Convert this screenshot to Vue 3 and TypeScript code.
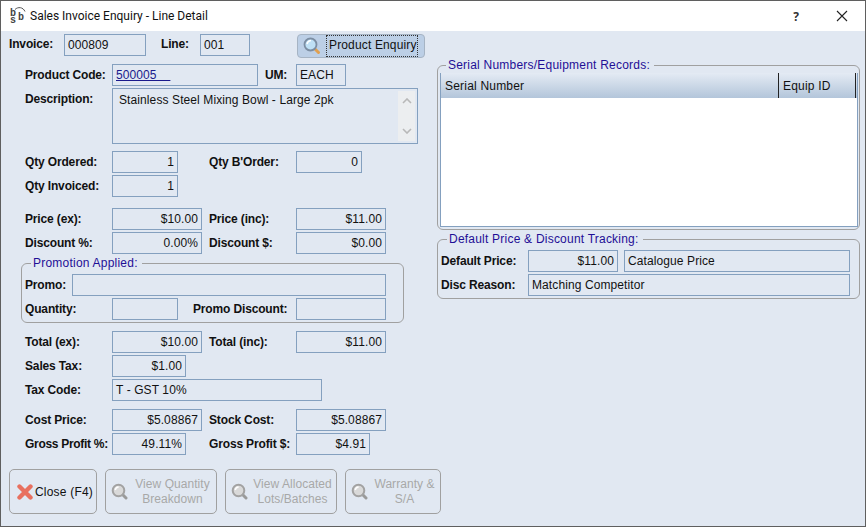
<script setup lang="ts">
const disabledActions = [
  { lines: ['View Quantity', 'Breakdown'], cls: 'w112' },
  { lines: ['View Allocated', 'Lots/Batches'], cls: 'w112' },
  { lines: ['Warranty &', 'S/A'], cls: 'w96' },
]
</script>

<template>
  <div class="window">
    <header class="titlebar">
      <svg class="logo" width="18" height="20" viewBox="0 0 18 20">
        <path d="M6 3.5 C9 0.5 14 1 16 5.5" fill="none" stroke="#555" stroke-width="1" />
        <text class="logo-t"><tspan x="1" y="10">b</tspan><tspan x="1" y="17">s</tspan><tspan x="9" y="14">b</tspan></text>
      </svg>
      <span class="title">Sales Invoice Enquiry - Line Detail</span>
      <span class="spacer"></span>
      <span class="help">?</span>
      <svg class="x" width="12" height="12" viewBox="0 0 12 12">
        <path d="M1 1 L11 11 M11 1 L1 11" stroke="#222" stroke-width="1.1" />
      </svg>
    </header>

    <main class="body">
      <section class="left">
        <div class="row top-row">
          <span class="lab inv">Invoice:</span>
          <span class="f w82">000809</span>
          <span class="lab line-lab">Line:</span>
          <span class="f w50">001</span>
          <button class="enquiry">
            <svg width="18" height="18" viewBox="0 0 18 18">
              <path d="M11.5 11.5 L15.5 15.5" stroke="#e0a050" stroke-width="3" stroke-linecap="round" />
              <circle cx="7.5" cy="7.5" r="6" fill="#bfe0f5" stroke="#7c8ea3" stroke-width="1.8" />
              <path d="M4 7 C4.5 4.8 6 3.8 8 3.6" fill="none" stroke="#fff" stroke-width="1.5" />
            </svg>
            <span class="focus">Product Enquiry</span>
          </button>
        </div>

        <div class="rows">
          <div class="row gap6">
            <span class="lab">Product Code:</span>
            <span class="f w146 link"><u>500005&nbsp;&nbsp;&nbsp;&nbsp;</u></span>
            <span class="lab um">UM:</span>
            <span class="f w50">EACH</span>
          </div>
          <div class="row desc-row gap2">
            <span class="lab desc-lab">Description:</span>
            <div class="f desc">
              <span class="desc-text">Stainless Steel Mixing Bowl - Large 2pk</span>
              <div class="scroll">
                <svg width="10" height="6" viewBox="0 0 10 6"><path d="M1 5 L5 1 L9 5" fill="none" stroke="#b8b8b8" stroke-width="1.6" /></svg>
                <svg width="10" height="6" viewBox="0 0 10 6"><path d="M1 1 L5 5 L9 1" fill="none" stroke="#b8b8b8" stroke-width="1.6" /></svg>
              </div>
            </div>
          </div>

          <div class="row gap7">
            <span class="lab">Qty Ordered:</span>
            <span class="slot"><span class="f w66 num">1</span></span>
            <span class="lab">Qty B'Order:</span>
            <span class="f w66 num">0</span>
          </div>
          <div class="row gap2">
            <span class="lab">Qty Invoiced:</span>
            <span class="f w66 num">1</span>
          </div>

          <div class="row gap11">
            <span class="lab">Price (ex):</span>
            <span class="slot"><span class="f w90 num">$10.00</span></span>
            <span class="lab">Price (inc):</span>
            <span class="f w90 num">$11.00</span>
          </div>
          <div class="row gap2">
            <span class="lab">Discount %:</span>
            <span class="slot"><span class="f w90 num">0.00%</span></span>
            <span class="lab">Discount $:</span>
            <span class="f w90 num">$0.00</span>
          </div>
        </div>

        <fieldset class="group promo">
          <legend>Promotion Applied:</legend>
          <div class="row">
            <span class="lab promo-lab">Promo:</span>
            <span class="f w314"></span>
          </div>
          <div class="row gap2">
            <span class="lab">Quantity:</span>
            <span class="slot wide"><span class="f w66"></span></span>
            <span class="lab pd">Promo Discount:</span>
            <span class="f w90"></span>
          </div>
        </fieldset>

        <div class="rows">
          <div class="row gap8">
            <span class="lab">Total (ex):</span>
            <span class="slot"><span class="f w90 num">$10.00</span></span>
            <span class="lab">Total (inc):</span>
            <span class="f w90 num">$11.00</span>
          </div>
          <div class="row gap2">
            <span class="lab">Sales Tax:</span>
            <span class="f w74 num">$1.00</span>
          </div>
          <div class="row gap2">
            <span class="lab">Tax Code:</span>
            <span class="f w210">T - GST 10%</span>
          </div>
          <div class="row gap8">
            <span class="lab">Cost Price:</span>
            <span class="slot"><span class="f w90 num">$5.08867</span></span>
            <span class="lab">Stock Cost:</span>
            <span class="f w90 num">$5.08867</span>
          </div>
          <div class="row gap2">
            <span class="lab tight">Gross Profit %:</span>
            <span class="slot"><span class="f w74 num">49.11%</span></span>
            <span class="lab">Gross Profit $:</span>
            <span class="f w74 num">$4.91</span>
          </div>
        </div>
      </section>

      <section class="right">
        <fieldset class="group serial">
          <legend>Serial Numbers/Equipment Records:</legend>
          <div class="table">
            <div class="thead">
              <span class="th c1">Serial Number</span>
              <span class="th c2">Equip ID</span>
            </div>
          </div>
        </fieldset>
        <fieldset class="group tracking">
          <legend>Default Price &amp; Discount Tracking:</legend>
          <div class="row">
            <span class="lab tl">Default Price:</span>
            <span class="f w90 num">$11.00</span>
            <span class="f w226 ml6">Catalogue Price</span>
          </div>
          <div class="row gap2">
            <span class="lab tl">Disc Reason:</span>
            <span class="f w322">Matching Competitor</span>
          </div>
        </fieldset>
      </section>
    </main>

    <footer class="actions">
      <button class="act close">
        <svg width="16" height="16" viewBox="0 0 16 16">
          <path d="M2.5 2.5 L13.5 13.5 M13.5 2.5 L2.5 13.5" stroke="#e8705f" stroke-width="4.4" stroke-linecap="round" />
        </svg>
        <span>Close (F4)</span>
      </button>
      <button v-for="a in disabledActions" :key="a.lines[0]" class="act off" :class="a.cls" disabled>
        <svg width="17" height="17" viewBox="0 0 17 17">
          <path d="M11 11 L15 15" stroke="#9a9a9a" stroke-width="3" stroke-linecap="round" />
          <circle cx="7.5" cy="7.5" r="5.8" fill="#d9d9d9" stroke="#a2a2a2" stroke-width="2" />
          <path d="M4.2 7 C4.6 5 5.8 4.2 7.6 4" fill="none" stroke="#fff" stroke-width="1.5" />
        </svg>
        <span class="act-text"><span v-for="l in a.lines" :key="l">{{ l }}</span></span>
      </button>
    </footer>
  </div>
</template>

<style scoped>
.window {
  box-sizing: border-box;
  width: 866px;
  height: 527px;
  display: flex;
  flex-direction: column;
  background: #e1e8f2;
  border: 1px solid #5f5f5f;
  font: 12px/14px "Liberation Sans", Arial, sans-serif;
  color: #111;
  overflow: hidden;
}
.titlebar {
  flex: none;
  height: 30px;
  display: flex;
  align-items: center;
  background: #fff;
  padding-left: 8px;
  padding-right: 17px;
}
.logo { flex: none; overflow: visible; }
.logo-t { font: 700 10px "Liberation Mono", monospace; fill: #444; }
.title { margin-left: 3px; font: 12px Roboto, sans-serif; color: #111; }
.spacer { flex: 1; }
.help { font: 700 12px "Noto Sans", sans-serif; margin-right: 37px; color: #333; }
.x { flex: none; }

.body { flex: none; display: flex; }
.left { width: 436px; flex: none; padding-top: 3px; }
.right { width: 423px; flex: none; }

.row { display: flex; align-items: center; height: 22px; flex: none; }
.rows { padding-left: 24px; }
.gap2 { margin-top: 2px; }
.gap6 { margin-top: 6px; }
.gap7 { margin-top: 7px; }
.gap8 { margin-top: 8px; }
.gap11 { margin-top: 11px; }

.lab { flex: none; width: 87px; font-weight: 700; white-space: nowrap; letter-spacing: -0.15px; }
.tight { letter-spacing: -0.3px; }
.slot { flex: none; width: 97px; display: flex; }
.f {
  flex: none;
  box-sizing: border-box;
  height: 22px;
  border: 1px solid #84a0bf;
  padding: 3px 3px;
  line-height: 14px;
  white-space: nowrap;
  letter-spacing: 0.1px;
}
.num { text-align: right; }
.w50 { width: 50px; }
.w66 { width: 66px; }
.w74 { width: 74px; }
.w82 { width: 82px; }
.w90 { width: 90px; }
.w146 { width: 146px; }
.w210 { width: 210px; }
.w226 { width: 226px; }
.w314 { width: 314px; }
.w322 { width: 322px; }
.ml6 { margin-left: 6px; }

.top-row { padding-left: 8px; height: 24px; align-items: flex-start; }
.inv { width: 55px; margin-top: 3px; }
.line-lab { width: 39px; margin-left: 15px; margin-top: 3px; }
.enquiry {
  box-sizing: border-box;
  width: 128px;
  height: 24px;
  margin-left: 47px;
  padding: 0 0 0 5px;
  display: flex;
  align-items: center;
  background: #bccfe6;
  border: 1px solid #a6b4c4;
  border-radius: 4px;
  font: inherit;
  color: #111;
}
.enquiry svg { flex: none; }
.focus {
  margin-left: 6px;
  padding: 2px 0 3px 2px;
  outline: 1px dotted #333;
  outline-offset: 0;
  line-height: 15px;
  white-space: nowrap;
  letter-spacing: 0.15px;
}

.link { color: #1a1a8c; }
.um { width: 31px; margin-left: 7px; }
.desc-row { height: 56px; align-items: flex-start; }
.desc-lab { margin-top: 4px; }
.desc {
  position: relative;
  width: 306px;
  height: 56px;
  padding: 4px 6px;
}
.scroll {
  position: absolute;
  top: 2px;
  right: 2px;
  bottom: 2px;
  width: 17px;
  background: #eceef0;
  display: flex;
  flex-direction: column;
  justify-content: space-between;
  align-items: center;
  padding: 7px 0;
  box-sizing: border-box;
}

.group {
  box-sizing: border-box;
  min-width: 0;
  margin: 0;
  border: 1px solid #a0a0a0;
  border-radius: 6px;
  background: transparent;
}
.group legend {
  margin-left: 6px;
  padding: 0 4px 0 2px;
  color: #1f0f96;
  line-height: 14px;
  letter-spacing: 0.22px;
}
.promo {
  width: 383px;
  height: 67px;
  margin: 2px 0 0 20px;
  padding: 4px 17px 0 3px;
}
.promo-lab { width: 47px; }
.wide { width: 81px; }
.pd { width: 103px; }

.serial {
  width: 423px;
  height: 172px;
  margin-top: 27px;
  padding: 1px 1px 1px 2px;
}
.table {
  box-sizing: border-box;
  width: 418px;
  height: 154px;
  background: #fff;
  border: 1px solid #84a0bf;
  border-top: 0;
}
.thead {
  height: 25px;
  display: flex;
  background: linear-gradient(#e4ebf4, #b3c5da);
}
.th { box-sizing: border-box; padding: 6px 0 0 4px; line-height: 14px; letter-spacing: 0.2px; }
.c1 { width: 338px; border-right: 1px solid #222; }
.c2 { width: 77px; border-right: 1px solid #222; }

.tracking {
  width: 423px;
  height: 67px;
  margin-top: 2px;
  padding: 4px 9px 0 3px;
}
.tl { width: 87px; }

.actions {
  margin-top: auto;
  display: flex;
  gap: 8px;
  padding: 0 0 12px 8px;
}
.act {
  box-sizing: border-box;
  height: 45px;
  background: transparent;
  border: 1px solid #a0a0a0;
  border-radius: 5px;
  font: inherit;
  padding: 0;
  display: flex;
  align-items: center;
  letter-spacing: 0.2px;
}
.close { width: 88px; color: #111; padding-left: 7px; gap: 2px; }
.off { color: #a8a8a8; padding-left: 5px; letter-spacing: 0.05px; }
.w112 { width: 112px; }
.w96 { width: 96px; }
.act svg { flex: none; }
.act-text {
  flex: 1;
  display: flex;
  flex-direction: column;
  align-items: center;
  line-height: 15px;
  padding-left: 1px;
}
</style>

<style>
html, body { margin: 0; overflow: hidden; }
</style>
